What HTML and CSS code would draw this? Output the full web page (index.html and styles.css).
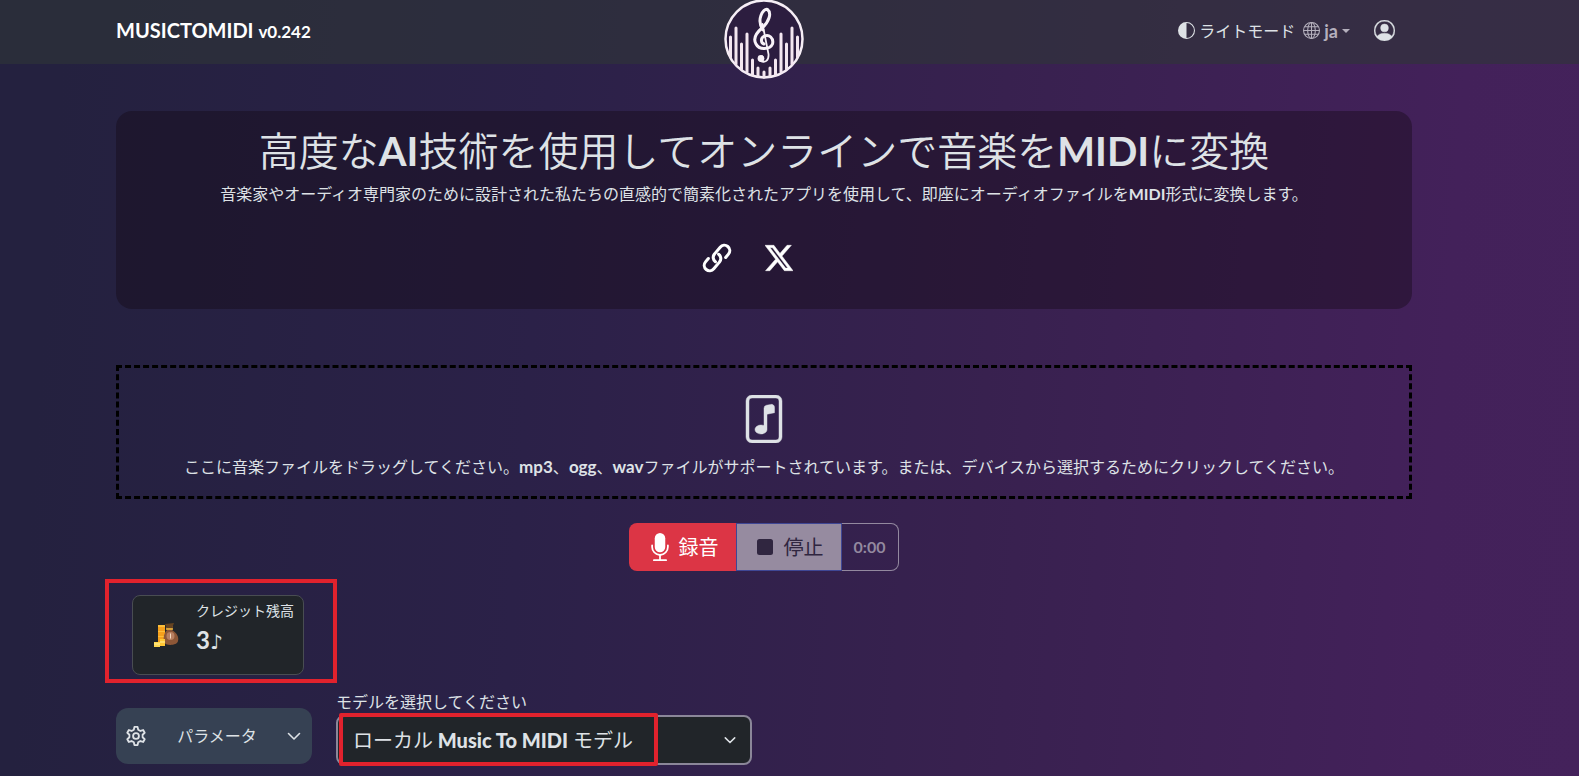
FILE: index.html
```html
<!DOCTYPE html>
<html lang="ja">
<head>
<meta charset="utf-8">
<title>MUSICTOMIDI</title>
<link rel="stylesheet" href="styles.css">
</head>
<body>
<header class="navbar">
  <div class="container navbar-inner">
    <a class="brand" href="#">MUSICTOMIDI <span class="version">v0.242</span></a>
    <nav class="nav-right">
      <button class="nav-btn light" type="button">
        <svg width="17" height="17" viewBox="0 0 16 16" fill="currentColor"><path d="M8 15A7 7 0 1 0 8 1zm0 1A8 8 0 1 1 8 0a8 8 0 0 1 0 16"/></svg>
        <span>ライトモード</span>
      </button>
      <button class="nav-btn lang" type="button">
        <svg width="17" height="17" viewBox="0 0 16 16" fill="none" stroke="currentColor"><circle cx="8" cy="8" r="7.5"/><ellipse cx="8" cy="8" rx="3.6" ry="7.5"/><path d="M8 .5v15M.5 8h15M1.7 4.5h12.6M1.7 11.5h12.6"/></svg>
        <b>ja</b><span class="caret"></span>
      </button>
      <button class="nav-btn user" type="button" aria-label="アカウント">
        <svg width="21" height="21" viewBox="0 0 16 16" fill="currentColor" stroke="currentColor" stroke-width=".3"><path d="M11 6a3 3 0 1 1-6 0 3 3 0 0 1 6 0"/><path fill-rule="evenodd" d="M0 8a8 8 0 1 1 16 0A8 8 0 0 1 0 8m8-7a7 7 0 0 0-5.468 11.37C3.242 11.226 4.805 10 8 10s4.757 1.225 5.468 2.37A7 7 0 0 0 8 1"/></svg>
      </button>
    </nav>
    <a class="logo" href="#" aria-label="MusicToMidi">
      <svg width="80" height="80" viewBox="0 0 80 80">
        <circle cx="40" cy="39" r="38.5" fill="#2c1d3f" stroke="#f6eef6" stroke-width="2.5"/>
        <g stroke="#f3e6f0" stroke-width="3" stroke-linecap="round">
          <path d="M6.500 37v20M12 28v36M17.500 44v25M23 34v38M28.500 60v15M34 68v8M40 72v5M46 68v8M51.500 60v15M57 34v38M62.500 44v25M68 28v36M73.500 37v20"/>
        </g>
        <g fill="none" stroke="#f8f2f8" stroke-linecap="round">
          <path d="M39 30C32 20 39 8 43.500 9.500C48 13 45 22 38 28C31 34 29 39 32 44C35 50 46 50 48.500 44C50 38 45 34 40.500 36C36 38 37 43 40 44" stroke-width="3"/>
          <path d="M38.500 24L44.500 54C45 61 41 63 36.500 61" stroke-width="1.800"/>
        </g>
        <circle cx="37" cy="58.500" r="3.400" fill="#f8f2f8"/>
      </svg>
    </a>
  </div>
</header>
<main>
  <div class="container">
    <section class="hero">
      <h1>高度な<b>AI</b>技術を使用してオンラインで音楽を<b>MIDI</b>に変換</h1>
      <p>音楽家やオーディオ専門家のために設計された私たちの直感的で簡素化されたアプリを使用して、即座にオーディオファイルを<b>MIDI</b>形式に変換します。</p>
      <div class="share">
        <a href="#" aria-label="リンク"><svg width="32" height="32" viewBox="0 0 24 24" fill="none" stroke="currentColor" stroke-width="2.300" stroke-linecap="round" stroke-linejoin="round"><path d="M13.200 9.200a4 4 0 0 1 .6 5.900l-4.200 5a4 4 0 0 1-6.200-5.200l2.100-2.500"/><path d="M10.800 14.800a4 4 0 0 1-.6-5.900l4.200-5a4 4 0 0 1 6.200 5.200l-2.100 2.500"/></svg></a>
        <a href="#" aria-label="X"><svg width="28" height="28" viewBox="0 0 16 16" fill="currentColor" stroke="currentColor" stroke-width=".3"><path d="M12.600.75h2.454l-5.360 6.142L16 15.250h-4.937l-3.867-5.070-4.425 5.070H.316l5.733-6.570L0 .75h5.063l3.495 4.633L12.601.75Zm-.86 13.028h1.360L4.323 2.145H2.865z"/></svg></a>
      </div>
    </section>
    <button class="dropzone" type="button">
      <svg width="48" height="48" viewBox="0 0 16 16" fill="currentColor" stroke="currentColor" stroke-width=".15"><path d="M10.304 3.130a1 1 0 0 1 1.196.98v1.800l-2.500.5v5.090c0 .495-.301.883-.662 1.123C7.974 12.866 7.499 13 7 13s-.974-.134-1.338-.377C5.302 12.383 5 11.995 5 11.500s.301-.883.662-1.123C6.026 10.134 6.501 10 7 10c.356 0 .7.068 1 .196V4.410a1 1 0 0 1 .804-.98z"/><path d="M4 0a2 2 0 0 0-2 2v12a2 2 0 0 0 2 2h8a2 2 0 0 0 2-2V2a2 2 0 0 0-2-2zm0 1h8a1 1 0 0 1 1 1v12a1 1 0 0 1-1 1H4a1 1 0 0 1-1-1V2a1 1 0 0 1 1-1"/></svg>
      <span>ここに音楽ファイルをドラッグしてください。<b>mp3</b>、<b>ogg</b>、<b>wav</b>ファイルがサポートされています。または、デバイスから選択するためにクリックしてください。</span>
    </button>
    <div class="recorder">
      <button class="rec" type="button">
        <svg width="28" height="28" viewBox="0 0 16 16" fill="currentColor"><path d="M5 3a3 3 0 0 1 6 0v5a3 3 0 0 1-6 0z"/><path d="M3.500 6.500A.5.5 0 0 1 4 7v1a4 4 0 0 0 8 0V7a.5.5 0 0 1 1 0v1a5 5 0 0 1-4.500 4.975V15h3a.5.5 0 0 1 0 1h-7a.5.5 0 0 1 0-1h3v-2.025A5 5 0 0 1 3 8V7a.5.5 0 0 1 .5-.5"/></svg>
        <span>録音</span>
      </button>
      <button class="stop" type="button" disabled>
        <svg width="16" height="16" viewBox="0 0 16 16"><rect width="16" height="16" rx="2.500" fill="currentColor"/></svg>
        <span>停止</span>
      </button>
      <button class="timer" type="button" disabled>0:00</button>
    </div>
    <div class="highlight credit-highlight">
      <div class="credit">
        <svg width="26" height="26" viewBox="0 0 26 26">
          <path d="M5 3h7v19H5z" fill="#f6a01c"/><path d="M5 3h7v2H5zM5 9h7v1H5zM5 14h7v1H5z" fill="#fcbf3a"/>
          <path d="M13 5l7-1-1 4c5 3 7 7 6 11-1 5-13 5-14 1-1-5 0-9 3-12z" fill="#8d5737"/><path d="M13 7h7" stroke="#f0ba3a" stroke-width="1.500"/><path d="M12 2l9-1-2 5h-5z" fill="#654321"/>
          <circle cx="17.500" cy="14" r="4" fill="#b88062"/><path d="M17.500 11.500v5" stroke="#f3d9c0"/>
          <path d="M7 17h5v7H7z" fill="#ffc735"/><path d="M1 20h6v5H1z" fill="#ffd84f"/><path d="M1 22h6M7 20h5" stroke="#fff0a0"/>
        </svg>
        <div class="credit-text"><span class="credit-label">クレジット残高</span><strong>3<span class="note">♪</span></strong></div>
      </div>
    </div>
    <div class="controls">
      <button class="params" type="button">
        <svg width="22" height="22" viewBox="0 0 24 24" fill="none" stroke="currentColor" stroke-width="2" stroke-linejoin="round"><path d="M10.300 2h3.400l.7 3.100 2.400 1.400 3-1 1.700 3-2.300 2.100v2.800l2.300 2.100-1.700 3-3-1-2.400 1.400-.7 3.100h-3.400l-.7-3.100-2.400-1.400-3 1-1.700-3 2.300-2.100v-2.800L2.500 8.500l1.700-3 3 1 2.400-1.400z"/><circle cx="12" cy="12" r="3.200"/></svg>
        <span>パラメータ</span>
        <svg width="14" height="14" viewBox="0 0 14 14" fill="none" stroke="currentColor" stroke-width="1.600" stroke-linecap="round" stroke-linejoin="round"><path d="M1.500 4.500L7 10l5.500-5.500"/></svg>
      </button>
      <div class="model">
        <label for="model">モデルを選択してください</label>
        <div class="select-wrap">
          <select id="model"><option>ローカル Music To MIDI モデル</option></select>
          <svg class="select-chev" width="12" height="12" viewBox="0 0 14 14" fill="none" stroke="currentColor" stroke-width="1.800" stroke-linecap="round" stroke-linejoin="round"><path d="M1.500 4.500L7 10l5.500-5.500"/></svg>
          <span class="highlight model-highlight"></span>
        </div>
      </div>
    </div>
  </div>
</main>
</body>
</html>
```
FILE: styles.css
```css
* { box-sizing: border-box; }
body {
  margin: 0;
  min-height: 100vh;
  overflow: hidden;
  color: #dee2e6;
  font: 400 16px/24px Lato, "Noto Sans CJK JP", sans-serif;
  background: linear-gradient(94deg, #24213f 4%, #2b2148 34%, #38214f 62%, #43215a 90%, #44225b 100%);
}
b, strong { font-weight: 700; }
button, select { font: inherit; color: inherit; cursor: pointer; }
button { margin: 0; padding: 0; border: 0; background: none; }
a { color: inherit; text-decoration: none; }
svg { display: block; flex: none; }
.container { max-width: 1296px; margin: 0 auto; }
.navbar, main { padding-right: 51px; }

.navbar { position: relative; height: 64px; background: rgba(46, 54, 55, .6); }
.navbar-inner { position: relative; display: flex; align-items: center; justify-content: space-between; height: 61px; }
.brand { color: #fff; font-size: 20px; font-weight: 700; }
.version { font-size: 17px; }
.nav-right { display: flex; align-items: center; padding-right: 17px; }
.nav-btn { display: flex; align-items: center; gap: 4px; }
.lang { margin-left: 8px; color: #b5b0bd; }
.lang b { font-size: 18px; }
.caret { border: 4px solid transparent; border-top-color: currentColor; border-bottom: 0; }
.user { margin-left: 24px; }
.logo { position: absolute; top: 0; left: 50%; margin-left: -40px; }

main { padding-top: 47px; }
.hero { padding: 16px 16px 35px; border-radius: 16px; background: rgba(20, 10, 20, .4); text-align: center; }
h1 { margin: 0; font-size: 40px; line-height: 48px; font-weight: 350; white-space: nowrap; }
.hero p { margin: 7px 0 0; white-space: nowrap; }
.share { display: flex; align-items: center; justify-content: center; gap: 32px; margin-top: 36px; padding-right: 34px; color: #fff; }

.dropzone { display: flex; flex-direction: column; align-items: center; gap: 12px; width: 100%; margin-top: 56px; padding: 27px 16px 17px; border: 3px dashed #000; white-space: nowrap; }
.dropzone b { font-size: 17px; }

.recorder { display: flex; justify-content: center; height: 48px; margin-top: 24px; font-size: 20px; }
.rec, .stop { display: flex; align-items: center; }
.rec { gap: 5px; padding: 0 17px; border-radius: 8px 0 0 8px; background: #dc3545; color: #fff; }
.stop { gap: 11px; padding: 0 17px 0 20px; border: 1px solid #3f4795; background: #968ba0; color: #302640; }
.timer { padding: 0 13px 0 12px; border: 1px solid #93899f; border-left: 0; border-radius: 0 8px 8px 0; color: #93899f; font-size: 16px; font-weight: 700; }

.highlight { border: 4px solid #e1222d; }
.credit-highlight { width: 232px; margin: 8px 0 0 -11px; padding: 12px 23px 4px; }
.credit { display: flex; align-items: center; gap: 17px; width: 172px; height: 80px; padding-left: 20px; border: 1px solid #494d52; border-radius: 8px; background: #212529; }
.credit-text { display: flex; flex-direction: column; height: 100%; padding-top: 4px; white-space: nowrap; }
.credit-label { font-size: 14px; line-height: 22px; }
.credit strong { font-size: 24px; line-height: 36px; }
.note { font-size: 20px; line-height: 20px; font-family: "DejaVu Sans", sans-serif; }

.controls { display: flex; align-items: flex-start; gap: 24px; margin-top: 7px; }
.params { display: flex; align-items: center; justify-content: space-between; width: 196px; height: 56px; margin-top: 18px; padding: 0 11px 0 9px; border-radius: 12px; background: #364153; }
.model { width: 416px; }
.model label { display: block; }
.select-wrap { position: relative; margin-top: 1px; }
select { width: 100%; height: 50px; padding: 0 15px; border: 2px solid #8b8799; border-radius: 8px; background: #212529; appearance: none; font-family: "Lato Heavy", "Lato Semibold", Lato, "Noto Sans CJK JP", sans-serif; font-size: 20px; }
.select-chev { position: absolute; right: 16px; top: 19px; pointer-events: none; }
.model-highlight { position: absolute; left: 3px; top: -2px; width: 319px; height: 53px; border-radius: 2px; pointer-events: none; }
```
